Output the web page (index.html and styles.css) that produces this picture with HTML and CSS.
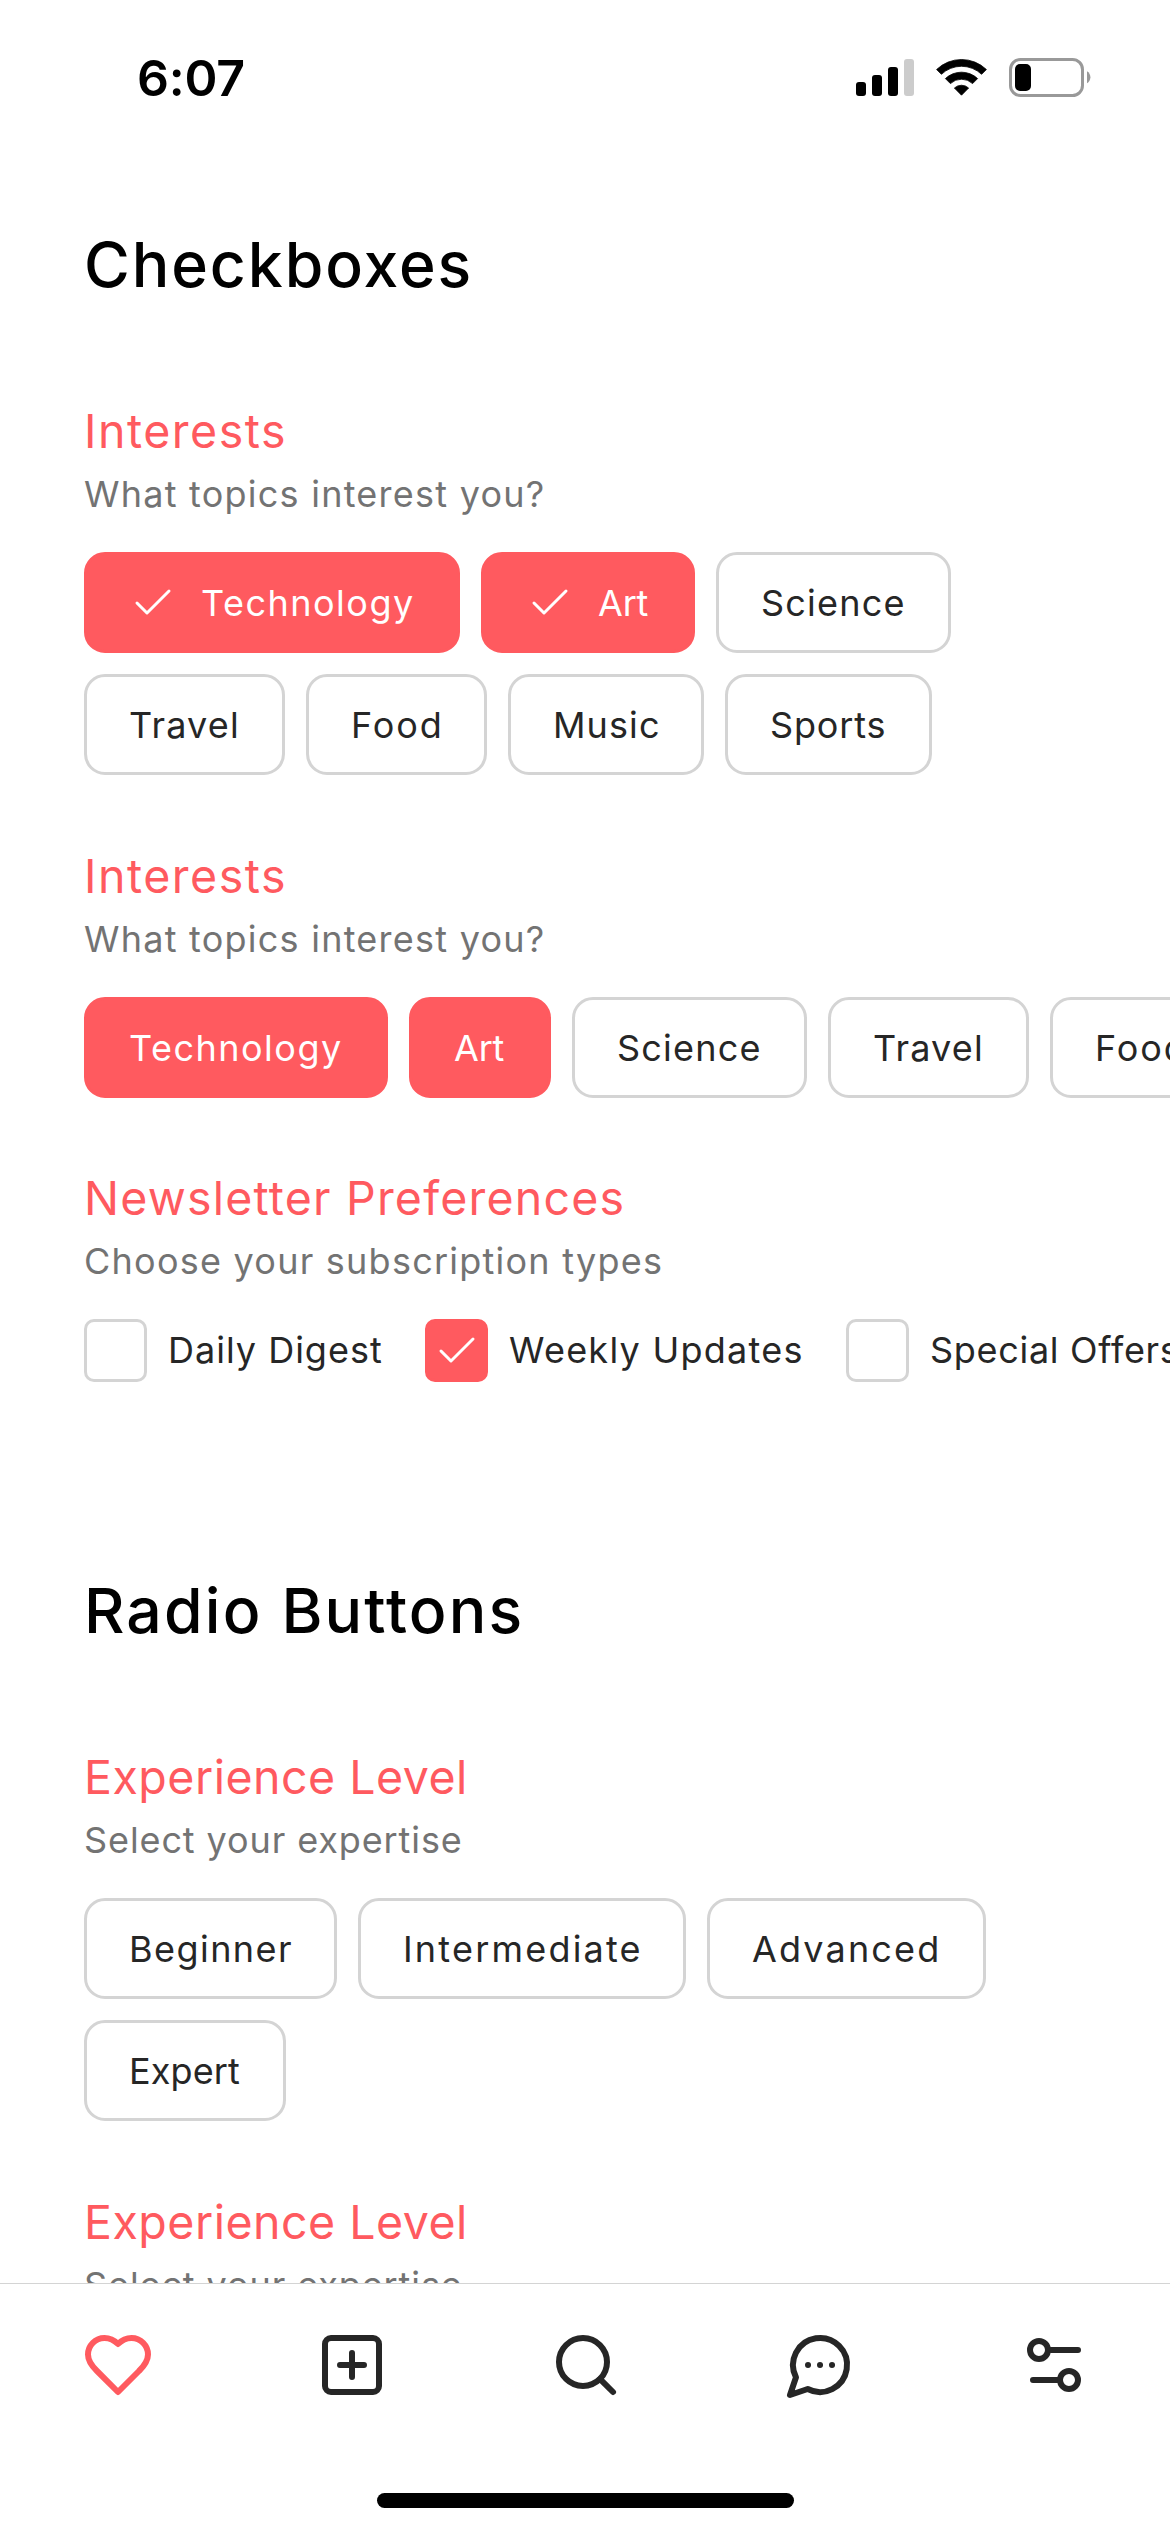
FILE: index.html
```
<!DOCTYPE html>
<html lang="en">
<head>
<meta charset="utf-8">
<title>Form controls</title>
<link rel="stylesheet" href="styles.css">
</head>
<body>
<div class="screen">
  <header class="status">
    <span class="status-time">6:07</span>
    <svg class="status-icons" width="236" height="40" viewBox="0 0 236 40">
      <rect x="0" y="24" width="10" height="14" rx="3"/>
      <rect x="16" y="17" width="10" height="21" rx="3"/>
      <rect x="32" y="9" width="10" height="29" rx="3"/>
      <rect x="48" y="1" width="10" height="37" rx="3" fill="#ccc"/>
      <g stroke="#000" stroke-width=".8" stroke-linejoin="round">
        <path d="M80.6 11.5A36 36 0 0 1 130.4 11.5L125.6 16.3A29.2 29.2 0 0 0 85.4 16.3Z"/>
        <path d="M89.4 20.6A23.4 23.4 0 0 1 121.6 20.6L116.6 25.6A16.2 16.2 0 0 0 94.4 25.6Z"/>
        <path d="M98.4 30A10.5 10.5 0 0 1 112.6 30L105.5 37.2Z"/>
      </g>
      <rect x="154.5" y="1.500" width="72" height="36" rx="10" fill="none" stroke="#999" stroke-width="3"/>
      <rect x="159" y="6" width="16" height="27" rx="5"/>
      <path d="M231 13.300v12a7 7 0 0 0 0-12Z" fill="#999"/>
    </svg>
  </header>

  <main class="content">
    <section class="section">
      <h1 class="title title-checkboxes">Checkboxes</h1>

      <div class="group">
        <h2 class="label label-interests">Interests</h2>
        <p class="hint">What topics interest you?</p>
        <div class="chips">
          <span class="chip chip-on chip-technology with-icon"><svg class="check" viewBox="0 0 24 24"><path d="M20 6 9 17l-5-5"/></svg>Technology</span>
          <span class="chip chip-on chip-art with-icon"><svg class="check" viewBox="0 0 24 24"><path d="M20 6 9 17l-5-5"/></svg>Art</span>
          <span class="chip chip-science">Science</span>
          <span class="chip chip-travel">Travel</span>
          <span class="chip chip-food">Food</span>
          <span class="chip chip-music">Music</span>
          <span class="chip chip-sports">Sports</span>
        </div>
      </div>

      <div class="group">
        <h2 class="label label-interests">Interests</h2>
        <p class="hint">What topics interest you?</p>
        <div class="chips chips-scroll">
          <span class="chip chip-on chip-technology">Technology</span>
          <span class="chip chip-on chip-art">Art</span>
          <span class="chip chip-science">Science</span>
          <span class="chip chip-travel">Travel</span>
          <span class="chip chip-food">Food</span>
        </div>
      </div>

      <div class="group group-newsletter">
        <h2 class="label label-newsletter">Newsletter Preferences</h2>
        <p class="hint">Choose your subscription types</p>
        <div class="checks">
          <span class="option option-daily"><span class="box"></span>Daily Digest</span>
          <span class="option option-weekly"><span class="box box-on"><svg class="check" viewBox="0 0 24 24"><path d="M20 6 9 17l-5-5"/></svg></span>Weekly Updates</span>
          <span class="option option-special"><span class="box"></span>Special Offers</span>
        </div>
      </div>
    </section>

    <section class="section">
      <h1 class="title title-radio">Radio Buttons</h1>

      <div class="group">
        <h2 class="label label-experience">Experience Level</h2>
        <p class="hint hint-select">Select your expertise</p>
        <div class="chips">
          <span class="chip chip-beginner">Beginner</span>
          <span class="chip chip-intermediate">Intermediate</span>
          <span class="chip chip-advanced">Advanced</span>
          <span class="chip chip-expert">Expert</span>
        </div>
      </div>

      <div class="group">
        <h2 class="label label-experience">Experience Level</h2>
        <p class="hint hint-select">Select your expertise</p>
      </div>
    </section>
  </main>

  <footer class="footer">
    <nav class="tabs">
      <svg class="tab tab-active" viewBox="0 0 24 24"><path d="M19 14c1.490-1.460 3-3.210 3-5.500A5.500 5.500 0 0 0 16.500 3c-1.760 0-3 .5-4.500 2-1.500-1.500-2.740-2-4.500-2A5.500 5.500 0 0 0 2 8.500c0 2.300 1.500 4.050 3 5.500l7 7Z"/></svg>
      <svg class="tab" viewBox="0 0 24 24"><rect x="3" y="3" width="18" height="18" rx="2"/><path d="M8 12h8M12 8v8"/></svg>
      <svg class="tab" viewBox="0 0 24 24"><circle cx="11" cy="11" r="8"/><path d="m21 21-4.300-4.300"/></svg>
      <svg class="tab" viewBox="0 0 24 24"><path d="M7.900 20A9 9 0 1 0 4 16.100L2 22ZM8 12h.01M12 12h.01M16 12h.01"/></svg>
      <svg class="tab" viewBox="0 0 24 24"><path d="M20 7h-9M14 17H5"/><circle cx="17" cy="17" r="3"/><circle cx="7" cy="7" r="3"/></svg>
    </nav>
    <div class="home-indicator"></div>
  </footer>
</div>
</body>
</html>
```
FILE: styles.css
```
* {
  box-sizing: border-box;
}

body {
  margin: 0;
  background: #fff;
  color: #262626;
  font-family: Inter, "Open Sans", sans-serif;
}

.screen {
  display: flex;
  flex-direction: column;
  width: 1170px;
  height: 2532px;
  overflow: hidden;
}

/* Status bar */
.status {
  flex: none;
  display: flex;
  justify-content: space-between;
  align-items: flex-start;
  height: 141px;
  padding: 58px 78px 0 137px;
  color: #000;
}

.status-time {
  font-size: 50px;
  font-weight: 600;
  line-height: 41px;
  letter-spacing: -0.2px;
}

/* Scrolling content */
.content {
  flex: 1;
  min-height: 0;
  overflow: hidden;
  padding: 79px 0 0 84px;
}

.section + .section {
  margin-top: 184px;
}

.title {
  margin: 0 0 85px;
  color: #000;
  font-size: 62.5px;
  font-weight: 500;
  line-height: 89px;
  padding-bottom: 1px;
}

.title-checkboxes { letter-spacing: 1.9px; }
.title-radio { letter-spacing: 2.15px; }

.group + .group {
  margin-top: 65px;
}

.group + .group-newsletter {
  margin-top: 64px;
}

.label {
  margin: 0;
  color: #ff5a5f;
  font-size: 46.5px;
  font-weight: 400;
  line-height: 72px;
}

.label-interests { letter-spacing: 1.5px; }
.label-newsletter { letter-spacing: 1.2px; }
.label-experience { letter-spacing: 0.5px; }

.hint {
  margin: 0 0 31px;
  color: #737373;
  font-size: 36px;
  line-height: 54px;
  letter-spacing: 1.24px;
}

.hint-select { letter-spacing: 0.9px; }

/* Chips */
.chips {
  display: flex;
  flex-wrap: wrap;
  gap: 21px;
  width: 1002px;
}

.chips-scroll {
  flex-wrap: nowrap;
  width: auto;
  overflow: hidden;
}

.chip {
  flex: none;
  display: flex;
  align-items: center;
  height: 101px;
  padding: 0 0 0 42px;
  border: 3px solid #d4d4d4;
  border-radius: 21px;
  font-size: 36px;
  line-height: 54px;
  white-space: nowrap;
}

.chip-on {
  border-color: #ff5a5f;
  background: #ff5a5f;
  color: #fff;
}

.chip-technology { width: 304px; letter-spacing: 1.5px; }
.chip-art { width: 142px; letter-spacing: -0.2px; }
.chip-science { width: 235px; letter-spacing: 1.2px; }
.chip-travel { width: 201px; letter-spacing: 1.2px; }
.chip-food { width: 181px; letter-spacing: 1.9px; }
.chip-music { width: 196px; letter-spacing: 1.1px; }
.chip-sports { width: 207px; letter-spacing: 0.85px; }
.chip-beginner { width: 253px; letter-spacing: 1.45px; }
.chip-intermediate { width: 328px; letter-spacing: 2.2px; }
.chip-advanced { width: 279px; letter-spacing: 2.15px; }
.chip-expert { width: 202px; letter-spacing: 0.1px; }

.chip-technology.with-icon { width: 376px; }
.chip-art.with-icon { width: 214px; }

.check {
  flex: none;
  width: 48px;
  height: 48px;
  fill: none;
  stroke: #fff;
  stroke-width: 1.5;
  stroke-linecap: round;
  stroke-linejoin: round;
}

.chip .check {
  margin-right: 24px;
}

/* Checkbox list */
.checks {
  display: flex;
  overflow: hidden;
}

.option {
  flex: none;
  display: flex;
  align-items: center;
  gap: 21px;
  height: 63px;
  font-size: 36px;
  line-height: 63px;
  white-space: nowrap;
}

.option-daily { width: 341px; letter-spacing: 1px; }
.option-weekly { width: 421px; letter-spacing: 1.25px; }
.option-special { letter-spacing: 0.7px; }

.box {
  display: flex;
  align-items: center;
  justify-content: center;
  width: 63px;
  height: 63px;
  border: 3px solid #d4d4d4;
  border-radius: 10px;
}

.box-on {
  border-color: #ff5a5f;
  background: #ff5a5f;
}

/* Bottom bar */
.footer {
  flex: none;
  display: flex;
  flex-direction: column;
  justify-content: space-between;
  align-items: center;
  height: 249px;
  padding-bottom: 24px;
  border-top: 1px solid #d4d4d4;
}

.tabs {
  display: flex;
  justify-content: space-between;
  width: 100%;
  padding: 45px 80px 0 82px;
}

.tab {
  width: 72px;
  height: 72px;
  fill: none;
  stroke: #262626;
  stroke-width: 2;
  stroke-linecap: round;
  stroke-linejoin: round;
}

.tab-active {
  stroke: #ff5a5f;
}

.home-indicator {
  width: 417px;
  height: 15px;
  border-radius: 8px;
  background: #000;
}
```
